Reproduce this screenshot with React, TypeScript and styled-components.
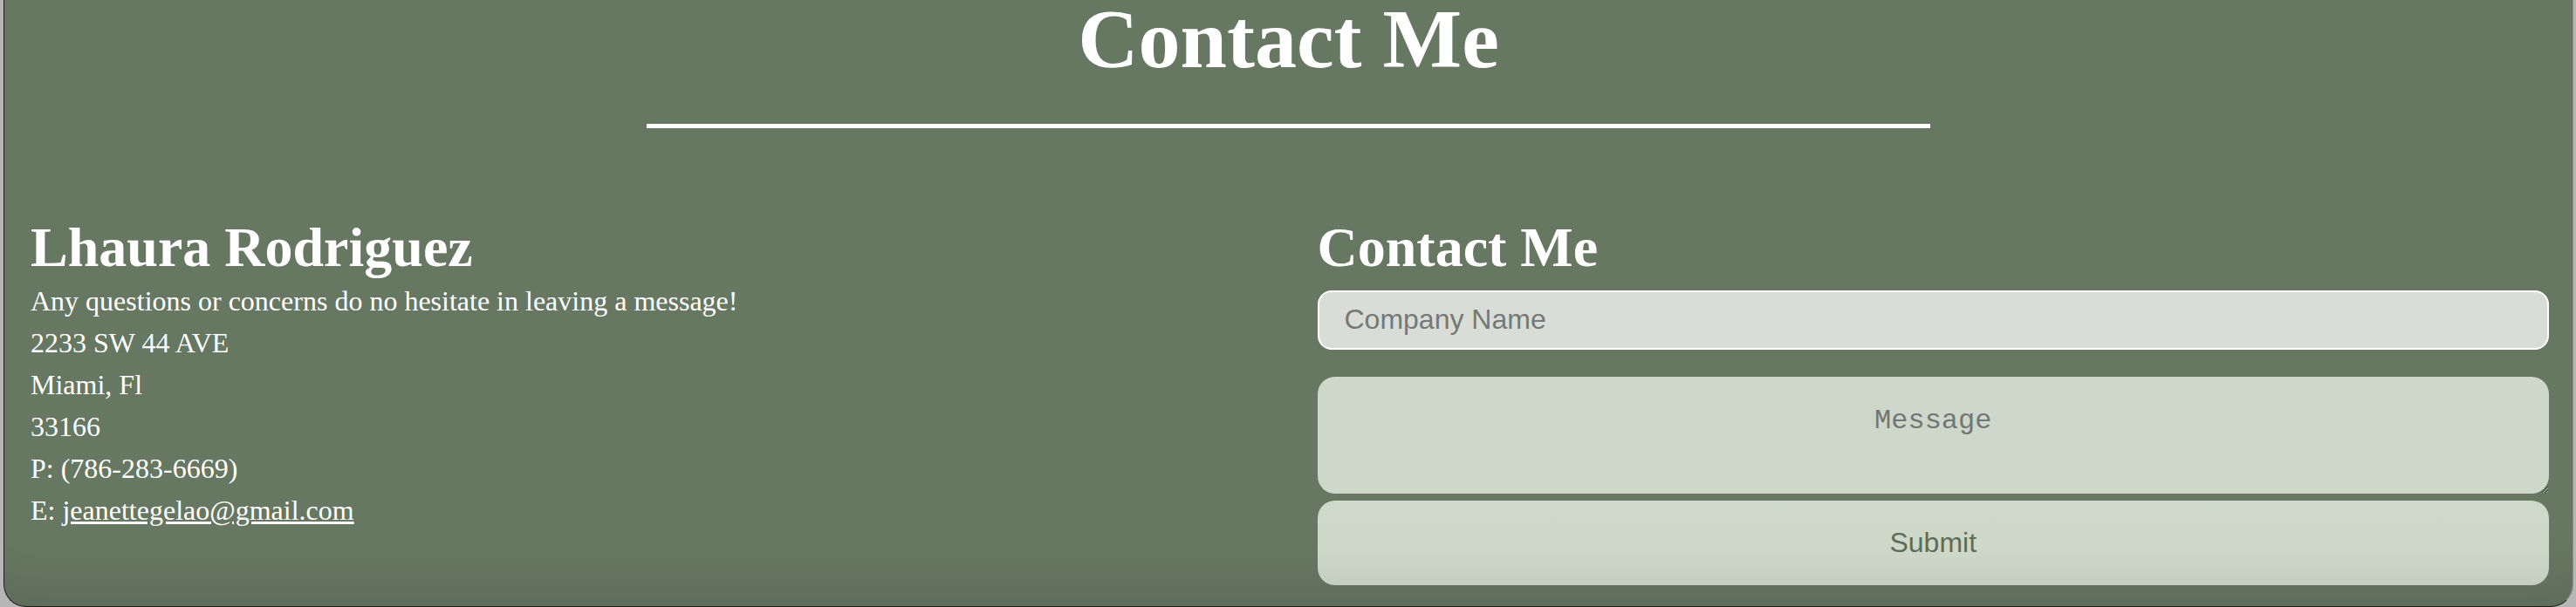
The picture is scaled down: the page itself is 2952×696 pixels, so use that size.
import React from 'react'
import styled, { createGlobalStyle } from 'styled-components'

const GlobalStyle = createGlobalStyle`
  html, body {
    margin: 0;
    padding: 0;
    background: #b6b6b6;
    overflow: hidden;
  }
  * {
    box-sizing: border-box;
  }
`

const Page = styled.div`
  padding: 0 3px 0 4px;
  height: 696px;
`

const Card = styled.section`
  display: flex;
  flex-direction: column;
  height: 696px;
  background: #667762;
  border: 1px solid #1e1e1e;
  border-top: none;
  border-right-color: #8a8f88;
  border-radius: 0 0 26px 26px;
  box-shadow: inset 0 -70px 60px -50px rgba(0, 0, 0, 0.1);
  font-family: 'Liberation Serif', 'Times New Roman', serif;
  color: #ffffff;
`

const Title = styled.h1`
  margin: 2px 0 0;
  font-size: 96px;
  line-height: 0.9;
  font-weight: 700;
  text-align: center;
`

const Rule = styled.hr`
  width: 50%;
  height: 5px;
  margin: 54px auto 0;
  border: none;
  background: #ffffff;
`

const Columns = styled.div`
  display: grid;
  grid-template-columns: 1fr 1fr;
  column-gap: 63px;
  padding: 0 27px 0 30px;
  margin-top: 100px;
`

const Info = styled.div`
  display: flex;
  flex-direction: column;
`

const SubTitle = styled.h2`
  margin: 0;
  font-size: 64px;
  line-height: 1.15;
  font-weight: 700;
`

const Line = styled.p`
  margin: 0;
  font-size: 32px;
  line-height: 48px;
`

const Mail = styled.a`
  color: #ffffff;
  text-decoration: underline;
`

const Form = styled.form`
  display: flex;
  flex-direction: column;
`

const TextInput = styled.input`
  margin-top: 12px;
  height: 68px;
  width: 100%;
  padding: 0 29px;
  border: 2px solid #ffffff;
  border-radius: 16px;
  background: #d9ddd7;
  font-family: 'Liberation Sans', Arial, sans-serif;
  font-size: 32px;
  color: #333;
  outline: none;

  &::placeholder {
    color: #767876;
  }
`

const MessageBox = styled.textarea`
  margin-top: 31px;
  height: 134px;
  width: 100%;
  padding: 32px 20px 0;
  border: none;
  border-radius: 20px;
  background: #cdd8ca;
  font-family: 'Liberation Mono', 'Courier New', monospace;
  font-size: 32px;
  text-align: center;
  outline: none;
  resize: both;

  &::placeholder {
    color: #737672;
  }
`

const SubmitButton = styled.button`
  margin-top: 8px;
  height: 97px;
  width: 100%;
  border: none;
  border-radius: 20px;
  background: linear-gradient(180deg, #cdd9ca 0%, #cdd8c9 60%, #c3cec0 100%);
  font-family: 'Liberation Sans', Arial, sans-serif;
  font-size: 32px;
  color: #5d6d59;
  cursor: pointer;
`

const App = () => {
  return (
    <>
      <GlobalStyle />
      <Page>
        <Card>
          <Title>Contact Me</Title>
          <Rule />
          <Columns>
            <Info>
              <SubTitle>Lhaura Rodriguez</SubTitle>
              <Line>Any questions or concerns do no hesitate in leaving a message!</Line>
              <Line>2233 SW 44 AVE</Line>
              <Line>Miami, Fl</Line>
              <Line>33166</Line>
              <Line>P: (786-283-6669)</Line>
              <Line>
                E: <Mail href="mailto:jeanettegelao@gmail.com">jeanettegelao@gmail.com</Mail>
              </Line>
            </Info>
            <Form onSubmit={(e) => e.preventDefault()}>
              <SubTitle>Contact Me</SubTitle>
              <TextInput type="text" placeholder="Company Name" />
              <MessageBox placeholder="Message" />
              <SubmitButton type="submit">Submit</SubmitButton>
            </Form>
          </Columns>
        </Card>
      </Page>
    </>
  )
}

export default App
